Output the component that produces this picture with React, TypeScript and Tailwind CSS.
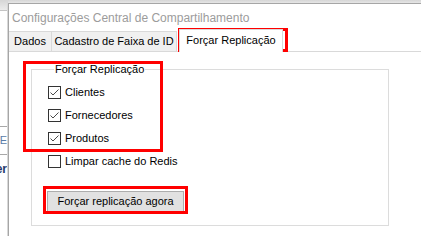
import React, { useState } from "react";

const Check: React.FC<{ checked: boolean; onToggle: () => void; label: string }> = ({
  checked,
  onToggle,
  label,
}) => (
  <label className="flex h-[23px] items-center cursor-default select-none" onClick={onToggle}>
    <span className="flex h-[13px] w-[13px] items-center justify-center border border-[#333333] bg-white">
      {checked && (
        <svg width="11" height="11" viewBox="0 0 11 11" fill="none">
          <path d="M1.5 5.5 L4 8 L9.5 2.5" stroke="#4a4a4a" strokeWidth="1" />
        </svg>
      )}
    </span>
    <span className="ml-[4px] text-[11px] leading-[13px] text-black">{label}</span>
  </label>
);

const App: React.FC = () => {
  const [opts, setOpts] = useState({
    clientes: true,
    fornecedores: true,
    produtos: true,
    redis: false,
  });

  const toggle = (k: keyof typeof opts) => setOpts({ ...opts, [k]: !opts[k] });

  return (
    <div
      className="relative flex h-[236px] w-[421px] overflow-hidden bg-white"
      style={{ fontFamily: '"Liberation Sans", Arial, sans-serif' }}
    >
      {/* window behind the dialog */}
      <div className="flex w-[8px] shrink-0 flex-col border-r border-[#d8d8d8]">
        <div className="h-[11px] shrink-0 border-b border-[#c4c4c4] bg-gradient-to-b from-[#d6d6d6] to-[#ececec]" />
        <div className="h-[115px] shrink-0" />
        <div className="flex h-[28px] shrink-0 items-center justify-end overflow-hidden border-t border-[#a8a8a8]">
          <span className="text-[11px] leading-none text-[#5a7ca8]">OE</span>
        </div>
        <div className="flex h-[28px] shrink-0 items-center justify-end overflow-hidden border-t border-[#a8a8a8]">
          <span className="text-[12px] font-bold leading-none text-[#1f3a6b]">er</span>
        </div>
      </div>

      {/* dialog */}
      <div className="flex flex-1 flex-col">
        <div className="h-[3px] shrink-0 bg-gradient-to-b from-[#d6d6d6] to-[#e6e6e6]" />
        <div className="flex flex-1 flex-col border-l border-t border-[#a6a6a6]">
          <div className="flex h-[26px] shrink-0 items-center pl-[3px] pt-[1px] text-[12px] text-[#9c9c9c]">
            Configurações Central de Compartilhamento
          </div>

          {/* tabs */}
          <div className="relative z-10 flex h-[21px] shrink-0 items-end">
            <div className="flex h-[20px] w-[43px] items-center justify-center border-r border-t border-[#d9d9d9] bg-[#f0f0f0] text-[11px] text-black">
              Dados
            </div>
            <div className="flex h-[20px] w-[125px] items-center justify-center border-r border-t border-[#d9d9d9] bg-[#f0f0f0] text-[11px] text-black">
              Cadastro de Faixa de ID
            </div>
            <div className="ml-[2px] mb-[-1px] flex h-[23px] w-[104px] items-center justify-center border-x border-t border-[#d9d9d9] bg-white pb-[2px] text-[11px] text-black">
              Forçar Replicação
            </div>
          </div>

          {/* panel */}
          <div className="flex-1 border-t border-[#d9d9d9] bg-white pl-[22px] pt-[11px]">
            <fieldset className="h-[163px] w-[358px] border border-[#dcdcdc] pl-[16px]">
              <legend className="ml-[6px] px-[1px] text-[11px] leading-[13px] text-black">
                Forçar Replicação
              </legend>
              <div className="mt-[5px] flex flex-col">
                <Check checked={opts.clientes} onToggle={() => toggle("clientes")} label="Clientes" />
                <Check
                  checked={opts.fornecedores}
                  onToggle={() => toggle("fornecedores")}
                  label="Fornecedores"
                />
                <Check checked={opts.produtos} onToggle={() => toggle("produtos")} label="Produtos" />
                <Check checked={opts.redis} onToggle={() => toggle("redis")} label="Limpar cache do Redis" />
              </div>
              <button
                type="button"
                className="ml-[-1px] mt-[18px] flex h-[21px] w-[137px] items-center justify-center border border-[#adadad] bg-[#e1e1e1] text-[11px] text-black"
              >
                Forçar replicação agora
              </button>
            </fieldset>
          </div>
        </div>
      </div>

      {/* highlight boxes */}
      <div className="pointer-events-none absolute left-[178px] top-[28px] h-[24px] w-[110px] border-[3px] border-[#ff0000]" />
      <div className="pointer-events-none absolute left-[23px] top-[61px] h-[91px] w-[140px] border-[3px] border-[#ff0000]" />
      <div className="pointer-events-none absolute left-[43px] top-[186px] h-[28px] w-[145px] border-[3px] border-[#ff0000]" />
    </div>
  );
};

export default App;
